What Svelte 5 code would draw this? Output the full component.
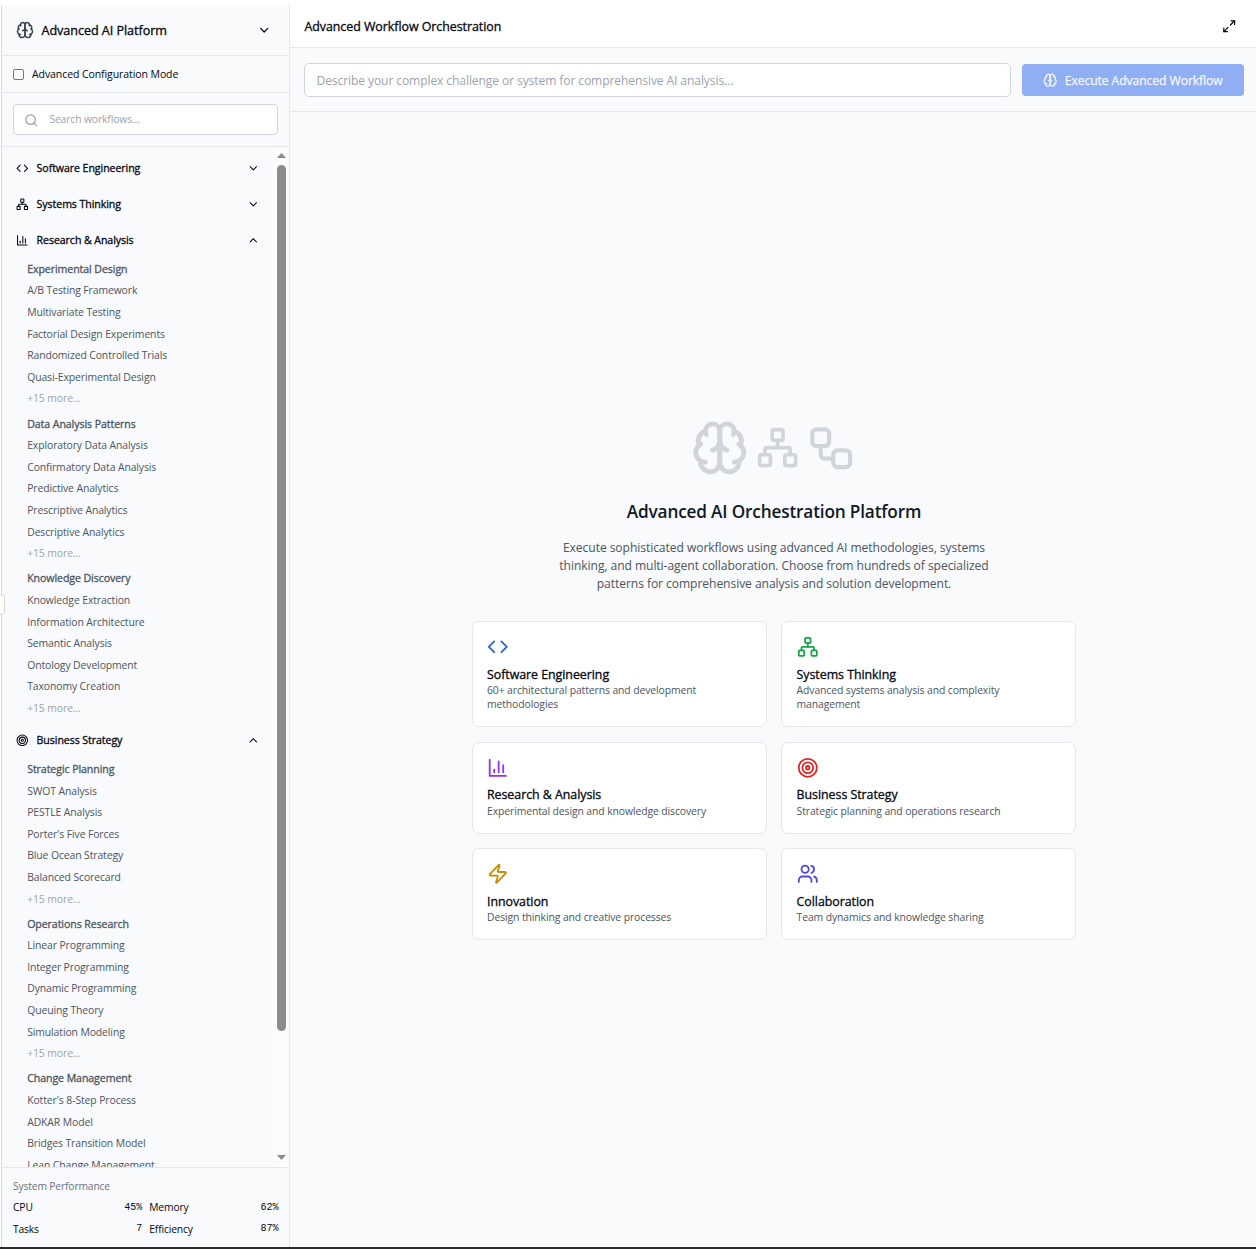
<script>
  const icons = {
    brain: [
      'M12 5a3 3 0 1 0-5.997.125 4 4 0 0 0-2.526 5.77 4 4 0 0 0 .556 6.588A4 4 0 1 0 12 18Z',
      'M12 5a3 3 0 1 1 5.997.125 4 4 0 0 1 2.526 5.77 4 4 0 0 1-.556 6.588A4 4 0 1 1 12 18Z',
      'M15 13a4.5 4.5 0 0 1-3-4 4.5 4.5 0 0 1-3 4',
      'M17.599 6.5a3 3 0 0 0 .399-1.375',
      'M6.003 5.125A3 3 0 0 0 6.401 6.5',
      'M3.477 10.896a4 4 0 0 1 .585-.396',
      'M19.938 10.5a4 4 0 0 1 .585.396',
      'M6 18a4 4 0 0 1-1.967-.516',
      'M19.967 17.484A4 4 0 0 1 18 18'
    ],
    code: ['m16 18 6-6-6-6', 'm8 6-6 6 6 6'],
    network: [
      'M17 16h4a1 1 0 0 1 1 1v4a1 1 0 0 1-1 1h-4a1 1 0 0 1-1-1v-4a1 1 0 0 1 1-1z',
      'M3 16h4a1 1 0 0 1 1 1v4a1 1 0 0 1-1 1H3a1 1 0 0 1-1-1v-4a1 1 0 0 1 1-1z',
      'M10 2h4a1 1 0 0 1 1 1v4a1 1 0 0 1-1 1h-4a1 1 0 0 1-1-1V3a1 1 0 0 1 1-1z',
      'M5 16v-3a1 1 0 0 1 1-1h12a1 1 0 0 1 1 1v3',
      'M12 12V8'
    ],
    workflow: [
      'M5 3h4a2 2 0 0 1 2 2v4a2 2 0 0 1-2 2H5a2 2 0 0 1-2-2V5a2 2 0 0 1 2-2z',
      'M7 11v4a2 2 0 0 0 2 2h4',
      'M15 13h4a2 2 0 0 1 2 2v4a2 2 0 0 1-2 2h-4a2 2 0 0 1-2-2v-4a2 2 0 0 1 2-2z'
    ],
    chart: ['M3 3v18h18', 'M13 17V5', 'M18 17V9', 'M8 17v-3'],
    target: [
      'M2 12a10 10 0 1 0 20 0a10 10 0 1 0-20 0',
      'M6 12a6 6 0 1 0 12 0a6 6 0 1 0-12 0',
      'M10 12a2 2 0 1 0 4 0a2 2 0 1 0-4 0'
    ],
    zap: [
      'M4 14a1 1 0 0 1-.78-1.63l9.9-10.2a.5.5 0 0 1 .86.46l-1.92 6.02A1 1 0 0 0 13 10h7a1 1 0 0 1 .78 1.63l-9.9 10.2a.5.5 0 0 1-.86-.46l1.92-6.02A1 1 0 0 0 11 14z'
    ],
    users: [
      'M16 21v-2a4 4 0 0 0-4-4H6a4 4 0 0 0-4 4v2',
      'M5 7a4 4 0 1 0 8 0a4 4 0 1 0-8 0',
      'M22 21v-2a4 4 0 0 0-3-3.87',
      'M16 3.13a4 4 0 0 1 0 7.75'
    ],
    search: ['M3 11a8 8 0 1 0 16 0a8 8 0 1 0-16 0', 'm21 21-4.3-4.3'],
    down: ['m6 9 6 6 6-6'],
    up: ['m18 15-6-6-6 6'],
    expand: ['M15 3h6v6', 'M9 21H3v-6', 'm21 3-7 7', 'm3 21 7-7']
  };

  const categories = [
    { name: 'Software Engineering', icon: 'code', groups: [] },
    { name: 'Systems Thinking', icon: 'network', groups: [] },
    {
      name: 'Research & Analysis',
      icon: 'chart',
      groups: [
        {
          name: 'Experimental Design',
          items: ['A/B Testing Framework', 'Multivariate Testing', 'Factorial Design Experiments', 'Randomized Controlled Trials', 'Quasi-Experimental Design']
        },
        {
          name: 'Data Analysis Patterns',
          items: ['Exploratory Data Analysis', 'Confirmatory Data Analysis', 'Predictive Analytics', 'Prescriptive Analytics', 'Descriptive Analytics']
        },
        {
          name: 'Knowledge Discovery',
          items: ['Knowledge Extraction', 'Information Architecture', 'Semantic Analysis', 'Ontology Development', 'Taxonomy Creation']
        }
      ]
    },
    {
      name: 'Business Strategy',
      icon: 'target',
      groups: [
        {
          name: 'Strategic Planning',
          items: ['SWOT Analysis', 'PESTLE Analysis', "Porter's Five Forces", 'Blue Ocean Strategy', 'Balanced Scorecard']
        },
        {
          name: 'Operations Research',
          items: ['Linear Programming', 'Integer Programming', 'Dynamic Programming', 'Queuing Theory', 'Simulation Modeling']
        },
        {
          name: 'Change Management',
          items: ["Kotter's 8-Step Process", 'ADKAR Model', 'Bridges Transition Model', 'Lean Change Management']
        }
      ]
    }
  ];

  const cards = [
    { name: 'Software Engineering', icon: 'code', tone: 'blue', text: '60+ architectural patterns and development methodologies' },
    { name: 'Systems Thinking', icon: 'network', tone: 'green', text: 'Advanced systems analysis and complexity management' },
    { name: 'Research & Analysis', icon: 'chart', tone: 'purple', text: 'Experimental design and knowledge discovery' },
    { name: 'Business Strategy', icon: 'target', tone: 'red', text: 'Strategic planning and operations research' },
    { name: 'Innovation', icon: 'zap', tone: 'yellow', text: 'Design thinking and creative processes' },
    { name: 'Collaboration', icon: 'users', tone: 'indigo', text: 'Team dynamics and knowledge sharing' }
  ];

  const stats = [
    ['CPU', '45%'],
    ['Memory', '62%'],
    ['Tasks', '7'],
    ['Efficiency', '87%']
  ];
</script>

{#snippet icon(name, cls)}
  <svg class="icon {cls}" viewBox="0 0 24 24" aria-hidden="true">
    {#each icons[name] as d}<path {d} />{/each}
  </svg>
{/snippet}

<div class="app">
  <aside class="sidebar">
    <header class="brand">
      {@render icon('brain', 's18 slate')}
      <h1>Advanced AI Platform</h1>
      {@render icon('down', 's14')}
    </header>
    <label class="mode"><span class="box"></span><span>Advanced Configuration Mode</span></label>
    <div class="search">
      <div class="search-field">
        {@render icon('search', 's14 muted')}
        <span>Search workflows...</span>
      </div>
    </div>
    <div class="scroller">
      <nav class="list">
        {#each categories as c}
          <div class="cat">
            {@render icon(c.icon, 's13')}
            <span>{c.name}</span>
            {@render icon(c.groups.length ? 'up' : 'down', 's13')}
          </div>
          {#if c.groups.length}
            <div class="groups">
              {#each c.groups as g}
                <div class="group">
                  <h2>{g.name}</h2>
                  {#each g.items as item}<div class="item">{item}</div>{/each}
                  {#if g.items.length === 5}<div class="item more">+15 more...</div>{/if}
                </div>
              {/each}
            </div>
          {/if}
        {/each}
      </nav>
      <div class="bar">
        <span class="tri up"></span>
        <span class="thumb"></span>
        <span class="tri dn"></span>
      </div>
    </div>
    <footer class="perf">
      <div class="perf-title">System Performance</div>
      <div class="stats">
        {#each stats as [k, v]}
          <div class="stat"><span>{k}</span><b>{v}</b></div>
        {/each}
      </div>
    </footer>
  </aside>

  <main class="main">
    <header class="top">
      <h2>Advanced Workflow Orchestration</h2>
      {@render icon('expand', 's14')}
    </header>
    <div class="prompt">
      <div class="prompt-field">Describe your complex challenge or system for comprehensive AI analysis...</div>
      <button class="run">{@render icon('brain', 's14')}<span>Execute Advanced Workflow</span></button>
    </div>
    <section class="stage">
      <div class="hero-icons">
        {@render icon('brain', 's58')}
        {@render icon('network', 's43')}
        {@render icon('workflow', 's50')}
      </div>
      <h3>Advanced AI Orchestration Platform</h3>
      <p class="lead">
        Execute sophisticated workflows using advanced AI methodologies, systems<br />
        thinking, and multi-agent collaboration. Choose from hundreds of specialized<br />
        patterns for comprehensive analysis and solution development.
      </p>
      <div class="cards">
        {#each cards as c}
          <article class="card">
            {@render icon(c.icon, 's22 ' + c.tone)}
            <h4>{c.name}</h4>
            <p>{c.text}</p>
          </article>
        {/each}
      </div>
    </section>
  </main>
  <span class="tab"></span>
</div>

<style>
  :global(body) { margin: 0; background: #fff; }
  * { box-sizing: border-box; }
  h1, h2, h3, h4, p { margin: 0; font-weight: 400; }
  /* Open Sans has no medium cut, so a hairline stroke thickens the regular one */
  h1, h2, h4, .cat span { -webkit-text-stroke: 0.3px currentColor; }
  .app {
    position: relative;
    display: flex;
    height: 1249px;
    padding-left: 1px;
    overflow: hidden;
    border-bottom: 2px solid #2b2b2e;
    font-family: "Open Sans", "Noto Sans", sans-serif;
    color: #030712;
  }
  .icon {
    flex: none;
    display: block;
    fill: none;
    stroke: currentColor;
    stroke-width: 2;
    stroke-linecap: round;
    stroke-linejoin: round;
  }
  .s13 { width: 12.6px; height: 12.6px; }
  .s14 { width: 14.4px; height: 14.4px; }
  .s18 { width: 18px; height: 18px; }
  .s22 { width: 21.6px; height: 21.6px; }
  .s43 { width: 43.2px; height: 43.2px; }
  .s50 { width: 50.4px; height: 50.4px; }
  .s58 { width: 57.6px; height: 57.6px; }
  .slate { color: #374151; }
  .muted { color: #9ca3af; }
  .blue { color: #2563eb; }
  .green { color: #16a34a; }
  .purple { color: #9333ea; }
  .red { color: #dc2626; }
  .yellow { color: #ca8a04; }
  .indigo { color: #4f46e5; }

  .sidebar {
    width: 289px;
    flex: none;
    margin-top: 5px;
    height: 1242px;
    display: flex;
    flex-direction: column;
    background: #f9fafb;
    border-left: 1px solid #dcdad8;
    border-right: 1px solid #e5e7eb;
    white-space: nowrap;
  }
  .brand {
    height: 51px;
    display: flex;
    align-items: center;
    padding: 0 18px 0 14px;
    border-bottom: 1px solid #e5e7eb;
  }
  .brand h1 { flex: 1; margin-left: 7.5px; font-size: 12.6px; letter-spacing: -0.05px; }
  .mode {
    height: 37px;
    display: flex;
    align-items: center;
    padding: 0 11px;
    gap: 8px;
    border-bottom: 1px solid #e5e7eb;
    font-size: 10.5px;
    letter-spacing: -0.08px;
  }
  .box { width: 11px; height: 11px; border: 1px solid #767676; border-radius: 2px; background: #fff; }
  .search { height: 54px; padding: 11px; border-bottom: 1px solid #e5e7eb; }
  .search-field {
    height: 31px;
    display: flex;
    align-items: center;
    gap: 11px;
    padding-left: 10px;
    padding-bottom: 1px;
    border: 1px solid #d1d5db;
    border-radius: 4px;
    background: #fff;
    color: #9ca3af;
    font-size: 10.4px;
    letter-spacing: -0.15px;
  }
  .search-field :global(svg) { margin-top: 2px; }
  .scroller { height: 1020px; display: flex; overflow: hidden; }
  .list { flex: 1; height: 1020px; padding-top: 3px; overflow: hidden; }
  .cat {
    height: 36px;
    display: flex;
    align-items: center;
    padding: 0 14.6px 0 14px;
    font-size: 10.6px;
    letter-spacing: -0.07px;
  }
  .cat span { flex: 1; margin-left: 8px; }
  .groups { padding: 0.9px 0 0 25.2px; margin-bottom: -1.1px; }
  .group { padding-bottom: 3.6px; font-size: 10.4px; line-height: 21.6px; letter-spacing: -0.1px; color: #4b5563; }
  .group h2 { font-size: 10.6px; letter-spacing: -0.08px; color: #4b5563; }
  .item { height: 21.6px; }
  .more { color: #9ca3af; }
  .bar {
    width: 15px;
    display: flex;
    flex-direction: column;
    align-items: center;
    padding: 6px 0 7px;
    background: #fcfcfc;
  }
  .tri { width: 9px; height: 5px; background: #8b8b8b; }
  .tri.up { clip-path: polygon(50% 0, 100% 100%, 0 100%); }
  .tri.dn { clip-path: polygon(0 0, 100% 0, 50% 100%); margin-top: auto; }
  .thumb { width: 9px; height: 866px; margin-top: 7px; border-radius: 4.5px; background: #8b8b8b; }
  .perf { flex: 1; border-top: 1px solid #e5e7eb; padding: 8px 10.5px 0 11px; font-size: 10.3px; letter-spacing: -0.15px; }
  .perf-title { height: 20.4px; line-height: 21px; color: #6b7280; }
  .stats { display: grid; grid-template-columns: 1fr 1fr; column-gap: 7px; }
  .stat { height: 21.6px; display: flex; align-items: center; justify-content: space-between; }
  .stat b { font: 400 10px "Liberation Mono", monospace; letter-spacing: 0; }

  .main { flex: 1; display: flex; flex-direction: column; background: #f9fafb; min-width: 0; }
  .top {
    height: 48px;
    display: flex;
    align-items: center;
    justify-content: space-between;
    padding: 5px 20px 0 14.4px;
    background: #fff;
    border-bottom: 1px solid #e5e7eb;
  }
  .top h2 { font-size: 12.4px; letter-spacing: -0.03px; }
  .prompt {
    height: 64px;
    display: flex;
    align-items: center;
    gap: 11px;
    padding: 0 12px 0 14px;
    border-bottom: 1px solid #e5e7eb;
    white-space: nowrap;
  }
  .prompt-field {
    flex: 1;
    height: 34px;
    line-height: 33px;
    padding-left: 11.5px;
    border: 1px solid #d1d5db;
    border-radius: 5px;
    background: #fff;
    color: #9ca3af;
    font-size: 12.1px;
    letter-spacing: -0.11px;
  }
  .run {
    width: 222px;
    height: 32px;
    display: flex;
    align-items: center;
    justify-content: center;
    gap: 7px;
    padding: 1px 0 0;
    border: 0;
    border-radius: 4px;
    background: #8faef3;
    color: #f4f7fe;
    font: 400 12.2px "Open Sans", "Noto Sans", sans-serif;
    letter-spacing: -0.1px;
  }
  .run span { -webkit-text-stroke: 0.25px currentColor; }
  .stage { display: flex; flex-direction: column; align-items: center; padding-top: 307px; padding-left: 2px; }
  .hero-icons { display: flex; align-items: center; gap: 7.2px; color: #d1d5db; }
  .stage h3 { margin-top: 21px; height: 28px; line-height: 28px; font-size: 17.2px; font-weight: 600; letter-spacing: -0.16px; color: #111827; }
  .lead { margin-top: 13px; font-size: 12.1px; font-weight: 400; line-height: 18px; text-align: center; letter-spacing: -0.07px; color: #4b5563; }
  .cards {
    margin-top: 28.7px;
    width: 604.8px;
    display: grid;
    grid-template-columns: 1fr 1fr;
    grid-template-rows: 106px 92px 92px;
    gap: 14.4px;
  }
  .card { border: 1px solid #e5e7eb; border-radius: 7px; background: #fff; padding: 13.9px 14.4px 0; }
  .card h4 { margin-top: 8.3px; height: 17.3px; line-height: 18px; font-size: 12.4px; letter-spacing: -0.04px; }
  .card p { font-size: 10.4px; font-weight: 400; line-height: 14px; letter-spacing: -0.1px; color: #4b5563; }
  .tab {
    position: absolute;
    left: -6px;
    top: 594px;
    width: 11px;
    height: 21px;
    border: 1px solid #d6d3d1;
    border-radius: 4px;
    background: #fff;
  }
</style>
